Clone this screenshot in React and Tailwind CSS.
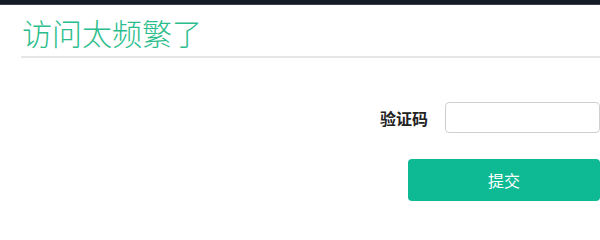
export default function App() {
  return (
    <div className="w-[600px] h-[204px] bg-white overflow-hidden" style={{ fontFamily: '"Liberation Serif", "Noto Sans CJK SC", serif' }}>
      <div className="h-[5px] bg-[#151b26] border-b border-[#3a3f4a]" />
      <div className="pl-[21px]">
        <h1 className="pl-px pt-[12px] pb-[3px] text-[30px] leading-[36px] text-[#2bbd8c] font-light border-b-2 border-[#e6e6e6]">
          访问太频繁了
        </h1>
        <div className="flex flex-col items-end pt-[44px]">
          <div className="flex items-center h-[31px]">
            <label className="text-[16px] font-bold text-[#222] mr-[17px]" style={{ fontFamily: '"Noto Sans CJK SC", sans-serif' }}>
              验证码
            </label>
            <input className="w-[155px] h-[31px] border border-[#cfcfcf] rounded-[4px] outline-none px-2" />
          </div>
          <button className="mt-[26px] w-[192px] h-[42px] rounded-[4px] bg-[#0dba94] text-white text-[16px]" style={{ fontFamily: '"Noto Sans CJK SC", sans-serif' }}>
            提交
          </button>
        </div>
      </div>
    </div>
  );
}
